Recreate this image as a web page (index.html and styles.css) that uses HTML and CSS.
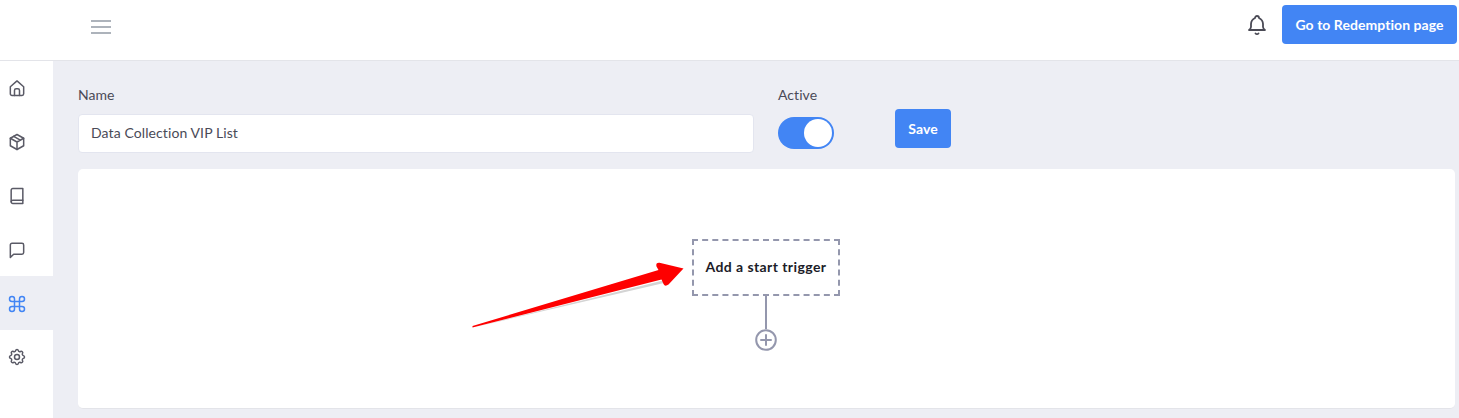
FILE: index.html
```html
<!DOCTYPE html>
<html lang="en">
<head>
    <meta charset="UTF-8">
    <meta name="viewport" content="width=device-width, initial-scale=1.0">
    <title>Data Collection VIP List</title>
    <link rel="stylesheet" href="styles.css">
</head>
<body>
    <header class="topbar">
        <button class="menu-toggle" type="button" aria-label="Menu">
            <span></span><span></span><span></span>
        </button>
        <div class="topbar-right">
            <svg class="bell" viewBox="0 0 24 24" width="24" height="24"><path d="M10 5a2 2 0 1 1 4 0 7 7 0 0 1 4 6v3a4 4 0 0 0 2 3H4a4 4 0 0 0 2-3v-3a7 7 0 0 1 4-6"/><path d="M10.5 20.5a2 2 0 0 0 3 0"/></svg>
            <a class="btn btn-redemption" href="#">Go to Redemption page</a>
        </div>
    </header>
    <div class="layout">
        <nav class="sidebar">
            <a class="nav-item" href="#"><svg viewBox="0 0 24 24" width="20" height="20"><path d="M4 10.500 12 3.500l8 7V19a2 2 0 0 1-2 2H6a2 2 0 0 1-2-2z"/><path d="M9 21v-6a2 2 0 0 1 2-2h2a2 2 0 0 1 2 2v6"/></svg></a>
            <a class="nav-item" href="#"><svg viewBox="0 0 24 24" width="20" height="20"><path d="M12 3l8 4.500v9L12 21l-8-4.500v-9z"/><path d="M12 12l8-4.500M12 12v9M12 12L4 7.500M8 5.200l8 4.600"/></svg></a>
            <a class="nav-item" href="#"><svg viewBox="0 0 24 24" width="20" height="20"><path d="M5 5a2 2 0 0 1 2-2h12v18H7a2 2 0 0 1-2-2z"/><path d="M5 19a2 2 0 0 1 2-2h12"/></svg></a>
            <a class="nav-item" href="#"><svg viewBox="0 0 24 24" width="20" height="20"><path d="M4 6a2 2 0 0 1 2-2h12a2 2 0 0 1 2 2v9a2 2 0 0 1-2 2H8l-4 4z"/></svg></a>
            <a class="nav-item active" href="#"><svg viewBox="0 0 24 24" width="20" height="20"><path d="M18 3a3 3 0 0 0-3 3v12a3 3 0 0 0 3 3 3 3 0 0 0 3-3 3 3 0 0 0-3-3H6a3 3 0 0 0-3 3 3 3 0 0 0 3 3 3 3 0 0 0 3-3V6a3 3 0 0 0-3-3 3 3 0 0 0-3 3 3 3 0 0 0 3 3h12a3 3 0 0 0 3-3 3 3 0 0 0-3-3z"/></svg></a>
            <a class="nav-item" href="#"><svg viewBox="0 0 24 24" width="20" height="20"><path d="M10.325 4.317c.426-1.756 2.924-1.756 3.35 0a1.724 1.724 0 0 0 2.573 1.066c1.543-.94 3.31.826 2.37 2.37a1.724 1.724 0 0 0 1.065 2.572c1.756.426 1.756 2.924 0 3.35a1.724 1.724 0 0 0-1.066 2.573c.94 1.543-.826 3.31-2.37 2.37a1.724 1.724 0 0 0-2.572 1.065c-.426 1.756-2.924 1.756-3.35 0a1.724 1.724 0 0 0-2.573-1.066c-1.543.94-3.31-.826-2.37-2.37a1.724 1.724 0 0 0-1.065-2.572c-1.756-.426-1.756-2.924 0-3.35a1.724 1.724 0 0 0 1.066-2.573c-.94-1.543.826-3.31 2.37-2.37.996.608 2.296.07 2.572-1.065z"/><circle cx="12" cy="12" r="3"/></svg></a>
        </nav>
        <main class="content">
            <form class="workflow-form">
                <div class="field field-name">
                    <label for="name">Name</label>
                    <input id="name" type="text" value="Data Collection VIP List">
                </div>
                <div class="field field-active">
                    <label>Active</label>
                    <span class="toggle"><span class="toggle-knob"></span></span>
                </div>
                <button class="btn btn-save" type="button">Save</button>
            </form>
            <section class="canvas">
                <div class="trigger">Add a start trigger</div>
                <div class="connector"></div>
                <svg class="add-step" viewBox="0 0 22 22" width="22" height="22"><circle cx="11" cy="11" r="9.800"/><path d="M11 6v10M6 11h10"/></svg>
                <!-- annotation drawn on top of the screenshot -->
                <svg class="arrow" viewBox="0 0 230 80" width="230" height="80">
                    <path class="arrow-shadow" d="M5 68.500 195 21.500 196 24z"/>
                    <path class="arrow-body" d="M4.500 67 190.500 11 188.500 7.500Q187.500 3.500 191.500 3.800L215.500 9.500 200.500 25.500Q197 28 195.500 25L193.500 20.500 4.500 68.500z"/>
                </svg>
            </section>
        </main>
    </div>
</body>
</html>
```

FILE: styles.css
```css
* {
    box-sizing: border-box;
}
html, body {
    height: 100%;
}
body {
    margin: 0;
    display: flex;
    flex-direction: column;
    overflow: hidden;
    font-family: "Lato", "Noto Sans", sans-serif;
    font-size: 14px;
    color: #4a4a57;
    background-color: #edeef4;
}
svg {
    display: block;
    fill: none;
    stroke: currentColor;
    stroke-width: 1.8;
    stroke-linecap: round;
    stroke-linejoin: round;
}

/* top bar */
.topbar {
    flex: none;
    display: flex;
    justify-content: space-between;
    align-items: flex-start;
    height: 61px;
    padding-left: 91px;
    padding-right: 2px;
    background-color: #fff;
    border-bottom: 1px solid #e3e4e9;
}
.menu-toggle {
    display: flex;
    flex-direction: column;
    gap: 4px;
    width: 20px;
    margin-top: 20px;
    padding: 0;
    border: none;
    background: none;
}
.menu-toggle span {
    display: block;
    height: 2px;
    background-color: #adb3bb;
}
.topbar-right {
    display: flex;
    align-items: center;
    gap: 13px;
    padding-top: 5px;
}
.bell {
    color: #4a4a55;
}
.btn {
    display: flex;
    align-items: center;
    justify-content: center;
    height: 39px;
    border: none;
    border-radius: 4px;
    background-color: #4285f4;
    color: #fff;
    font-family: inherit;
    font-size: 14px;
    font-weight: 700;
    letter-spacing: 0.05px;
    text-decoration: none;
}
.btn-redemption {
    width: 175px;
}

/* sidebar */
.layout {
    flex: 1;
    display: flex;
    min-height: 0;
}
.sidebar {
    flex: none;
    width: 53px;
    background-color: #fff;
}
.nav-item {
    display: flex;
    align-items: center;
    justify-content: center;
    height: 54px;
    padding-right: 20px;
    color: #5a5a66;
}
.nav-item.active {
    margin-top: -1px;
    padding-top: 1px;
    background-color: #edeef4;
    color: #4285f4;
}

/* form */
.content {
    flex: 1;
    padding: 24px 4px 10px 25px;
    min-width: 0;
}
.workflow-form {
    display: flex;
    align-items: flex-start;
}
.field label {
    display: block;
    height: 20px;
    line-height: 20px;
    letter-spacing: 0.05px;
}
.field-name {
    width: 676px;
    margin-right: 24px;
}
.field-name input {
    display: block;
    width: 100%;
    height: 39px;
    margin-top: 9px;
    padding: 0 12px 2px;
    border: 1px solid #e3e5ef;
    border-radius: 4px;
    background-color: #fff;
    color: #4a4a57;
    font-family: inherit;
    font-size: 14px;
    letter-spacing: 0.1px;
}
.field-active {
    width: 56px;
    margin-right: 61px;
}
.toggle {
    display: flex;
    justify-content: flex-end;
    align-items: center;
    width: 56px;
    height: 32px;
    margin-top: 12px;
    padding-right: 2px;
    border-radius: 16px;
    background-color: #4285f4;
}
.toggle-knob {
    width: 28px;
    height: 28px;
    border-radius: 50%;
    background-color: #fff;
}
.btn-save {
    width: 56px;
    margin-top: 24px;
}

/* workflow canvas */
.canvas {
    position: relative;
    display: flex;
    flex-direction: column;
    align-items: center;
    height: 240px;
    margin-top: 16px;
    padding-top: 70px;
    padding-right: 1px;
    border-radius: 5px;
    background-color: #fff;
    border-bottom: 1px solid #e3e4e9;
}
.trigger {
    display: flex;
    align-items: center;
    justify-content: center;
    width: 148px;
    height: 57px;
    padding-bottom: 2px;
    border: 2px dashed #9497ad;
    color: #1c1c28;
    font-weight: 700;
    letter-spacing: 0.42px;
}
.connector {
    width: 2px;
    height: 33px;
    background-color: #9497ad;
}
.add-step {
    color: #9497ad;
    stroke-width: 2;
}
.arrow {
    position: absolute;
    left: 390px;
    top: 90px;
    stroke: none;
}
.arrow-body {
    fill: #fe0000;
}
.arrow-shadow {
    fill: #d4d4d4;
}
```
